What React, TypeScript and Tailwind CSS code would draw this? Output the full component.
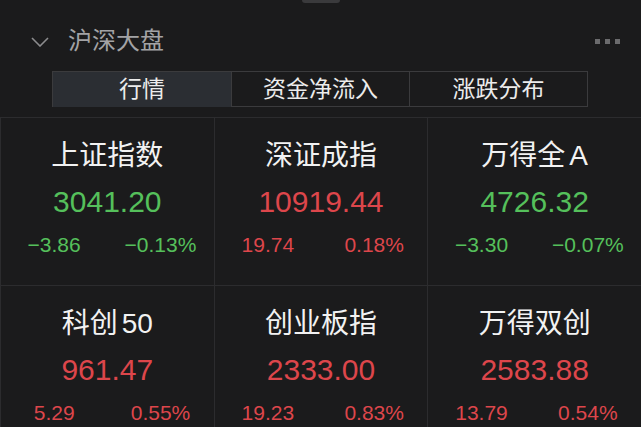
const UP = "text-[#dd464b]";
const DOWN = "text-[#55c05b]";

type Index = {
  name: string;
  suffix?: string;
  value: string;
  change: string;
  pct: string;
  up: boolean;
};

const indices: Index[] = [
  { name: "上证指数", value: "3041.20", change: "−3.86", pct: "−0.13%", up: false },
  { name: "深证成指", value: "10919.44", change: "19.74", pct: "0.18%", up: true },
  { name: "万得全", suffix: "A", value: "4726.32", change: "−3.30", pct: "−0.07%", up: false },
  { name: "科创", suffix: "50", value: "961.47", change: "5.29", pct: "0.55%", up: true },
  { name: "创业板指", value: "2333.00", change: "19.23", pct: "0.83%", up: true },
  { name: "万得双创", value: "2583.88", change: "13.79", pct: "0.54%", up: true },
];

const tabs = ["行情", "资金净流入", "涨跌分布"];

function IndexCard({ item }: { item: Index }) {
  const color = item.up ? UP : DOWN;
  return (
    <div className="bg-[#1b1b1c] pt-[20px] pb-[23px] flex flex-col">
      <div className="h-[36px] flex items-center justify-center text-[28px] text-[#f2f2f2]">
        {item.name}
        {item.suffix && <span className="ml-[4px]">{item.suffix}</span>}
      </div>
      <div className={`h-[54px] flex items-center justify-center text-[30px] ${color}`}>
        {item.value}
      </div>
      <div className={`h-[34px] grid grid-cols-2 text-[21px] ${color}`}>
        <span className="flex items-center justify-center">{item.change}</span>
        <span className="flex items-center justify-center">{item.pct}</span>
      </div>
    </div>
  );
}

export default function App() {
  return (
    <div
      className="w-[641px] h-[427px] overflow-hidden bg-[#1b1b1c]"
      style={{ fontFamily: '"Liberation Sans", "Noto Sans CJK SC", sans-serif' }}
    >
      <div className="h-[3px] flex justify-center">
        <div className="w-[38px] h-[3px] ml-[1px] rounded-b-sm bg-[#3a3a3c]" />
      </div>

      {/* header */}
      <div className="h-[68px] pt-[8px] pl-[31px] pr-[21px] flex items-center">
        <svg width="18" height="10" viewBox="0 0 18 10" className="mt-[1px]">
          <polyline
            points="1,1 9,9 17,1"
            fill="none"
            stroke="#8c8c8e"
            strokeWidth="1.6"
          />
        </svg>
        <span className="ml-[19px] flex-1 text-[24px] text-[#a3a3a5]">沪深大盘</span>
        <div className="flex gap-[5px]">
          <span className="w-[5px] h-[5px] bg-[#6b6b6d]" />
          <span className="w-[5px] h-[5px] bg-[#6b6b6d]" />
          <span className="w-[5px] h-[5px] bg-[#6b6b6d]" />
        </div>
      </div>

      {/* tabs */}
      <div className="ml-[52px] mr-[53px] h-[36px] grid grid-cols-3 border border-[#3b3b3d]">
        {tabs.map((t, i) => (
          <div
            key={t}
            className={`flex items-center justify-center text-[23px] text-[#ececec] ${
              i === 0 ? "bg-[#2b2e33]" : ""
            } ${i > 0 ? "border-l border-[#3b3b3d]" : ""}`}
          >
            {t}
          </div>
        ))}
      </div>

      {/* index grid */}
      <div className="mt-[10px] grid grid-cols-3 gap-px bg-[#2c2c2e] pl-px pt-px">
        {indices.map((item) => (
          <IndexCard key={item.name} item={item} />
        ))}
      </div>
    </div>
  );
}
